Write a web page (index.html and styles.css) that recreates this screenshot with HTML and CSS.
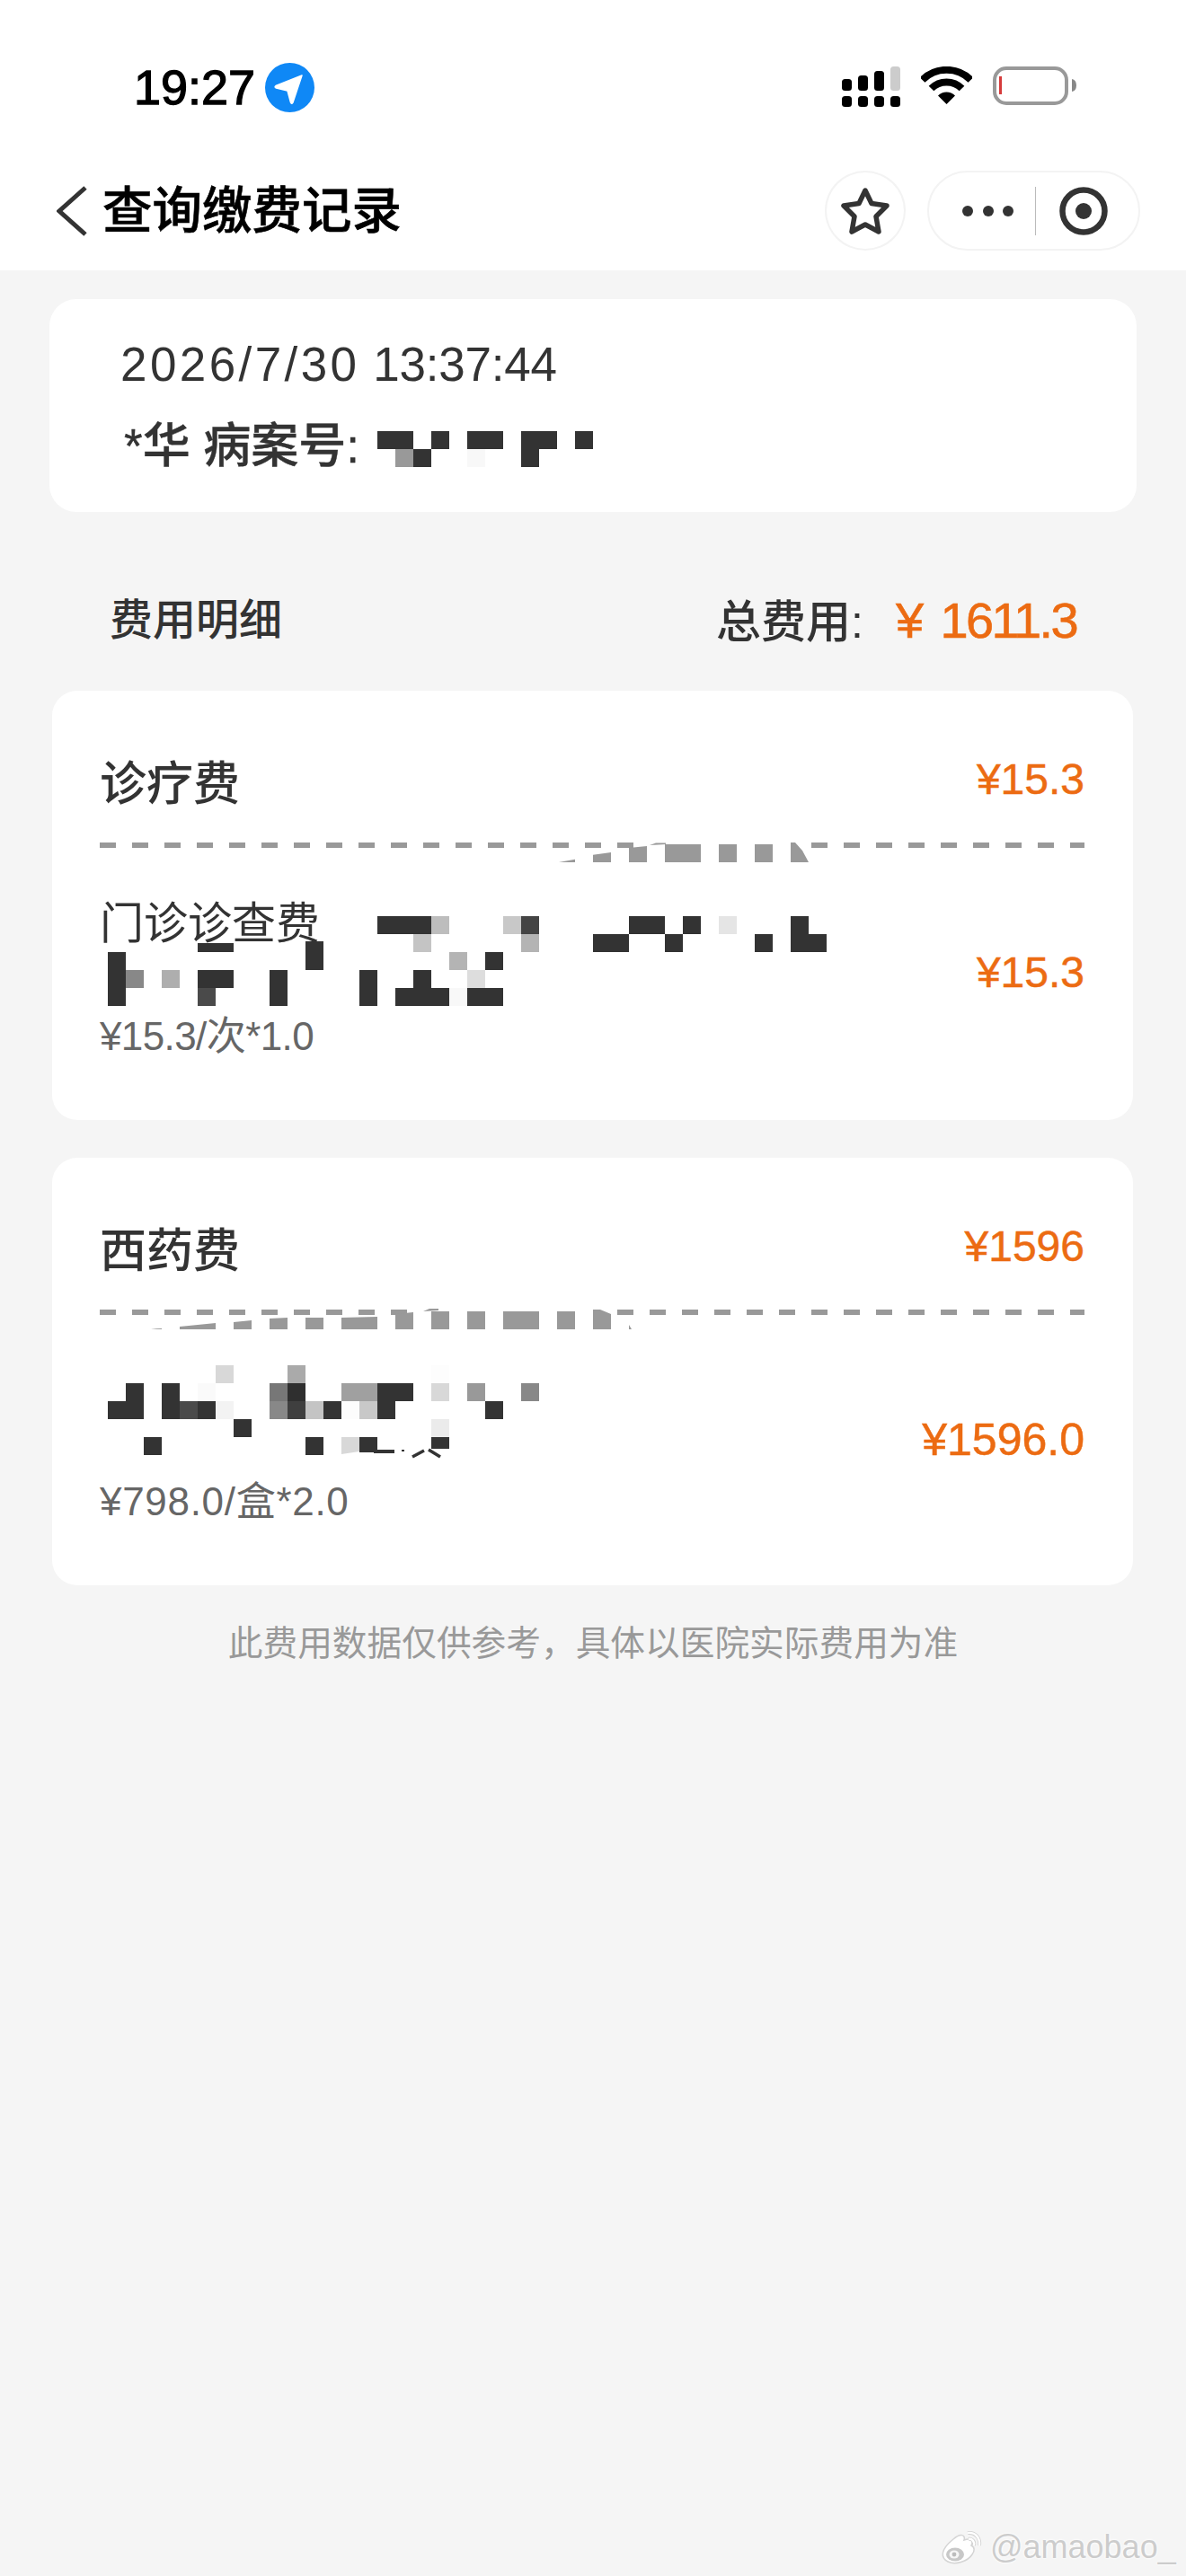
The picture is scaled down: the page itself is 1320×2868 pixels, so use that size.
FILE: index.html
```html
<!DOCTYPE html>
<html lang="zh-CN">
<head>
<meta charset="utf-8">
<title>查询缴费记录</title>
<link rel="stylesheet" href="styles.css">
</head>
<body>
<div class="page">
  <header class="header">
    <div class="status">
      <span class="time">19:27</span>
      <svg class="loc" width="55" height="55" viewBox="0 0 55 55"><circle cx="27.5" cy="27.5" r="27.5" fill="#0f88f6"/><path d="M41 14 L12 25.5 Q10 27 12.5 28 L25 31 L28.5 44 Q29.5 46.5 31 44 Z" fill="#fff" stroke="#fff" stroke-width="1.5" stroke-linejoin="round"/></svg>
      <div class="status-right">
        <svg width="65" height="45" viewBox="0 0 65 45"><g fill="#000"><rect x="0" y="14" width="11" height="13" rx="3.5"/><rect x="18" y="10" width="11" height="17" rx="3.5"/><rect x="36" y="5" width="11" height="22" rx="3.5"/><rect x="0" y="33" width="11" height="12" rx="3.5"/><rect x="18" y="33" width="11" height="12" rx="3.5"/><rect x="36" y="33" width="11" height="12" rx="3.5"/><rect x="54" y="33" width="11" height="12" rx="3.5"/></g><rect x="54" y="0" width="11" height="27" rx="3.5" fill="#ccc"/></svg>
        <svg width="57" height="42" viewBox="0 0 57 42"><g fill="none" stroke="#000" stroke-width="8"><path d="M1.6 15 A38 38 0 0 1 55.4 15"/><path d="M11.5 24.5 A24 24 0 0 1 45.5 24.5"/></g><path d="M28.5 42 L19 32.5 A13.5 13.5 0 0 1 38 32.5 Z" fill="#000"/></svg>
        <svg width="93" height="43" viewBox="0 0 93 43"><rect x="2" y="2" width="80" height="39" rx="13" fill="#fff" stroke="#999" stroke-width="4"/><rect x="7" y="11" width="3" height="20" fill="#d63b3b"/><path d="M88 14 Q93 15 93 21 Q93 27 88 28 Z" fill="#888"/></svg>
      </div>
    </div>
    <nav class="nav">
      <svg class="back" width="34" height="56" viewBox="0 0 34 56"><path d="M32 2 L3 28 L32 54" fill="none" stroke="#333" stroke-width="5"/></svg>
      <h1 class="title">查询缴费记录</h1>
      <div class="round-btn">
        <svg width="56" height="54" viewBox="0 0 56 54"><path d="M28 4 L35 18.5 L52 21 L40 33 L43 50 L28 42 L13 50 L16 33 L4 21 L21 18.5 Z" fill="none" stroke="#333" stroke-width="5.5" stroke-linejoin="round"/></svg>
      </div>
      <div class="capsule">
        <span class="dots"><i></i><i></i><i></i></span>
        <span class="sep"></span>
        <svg width="54" height="54" viewBox="0 0 54 54"><circle cx="27" cy="27" r="23.5" fill="none" stroke="#333" stroke-width="6.5"/><circle cx="27" cy="27" r="9" fill="#333"/></svg>
      </div>
    </nav>
  </header>

  <section class="patient">
    <div class="date"><span class="date-day">2026/7/30</span> <span class="date-time">13:37:44</span></div>
    <div class="who">*华 病案号:</div>
  </section>

  <div class="summary">
    <span class="summary-label">费用明细</span>
    <span class="summary-total">总费用:<b class="total">¥ 1611.3</b></span>
  </div>

  <section class="card">
    <div class="card-head"><span class="card-title">诊疗费</span><span class="price">¥15.3</span></div>
    <div class="dash"></div>
    <div class="item">
      <div class="item-text">
        <div class="item-name">门诊诊查费</div>
        <div class="item-unit item-unit-tight">¥15.3/次*1.0</div>
      </div>
      <span class="price">¥15.3</span>
    </div>
  </section>

  <section class="card card-second">
    <div class="card-head"><span class="card-title">西药费</span><span class="price">¥1596</span></div>
    <div class="dash"></div>
    <div class="item">
      <div class="item-text">
        <div class="item-name item-name-hidden"></div>
        <div class="item-unit item-unit-wide">¥798.0/盒*2.0</div>
      </div>
      <span class="price price-large">¥1596.0</span>
    </div>
  </section>

  <p class="note">此费用数据仅供参考，具体以医院实际费用为准</p>

  <div class="watermark">
    <svg width="48" height="40" viewBox="0 0 48 40"><path d="M14 11 C22 4 28 6 26 12 C33 9 37 13 34 18 C38 20 38 24 35 28 C30 36 16 40 8 36 C0 32 -1 23 14 11 Z" fill="#fff" stroke="#d4d4d4" stroke-width="1.5"/><ellipse cx="16" cy="28" rx="10" ry="7.5" fill="#c8c8c8"/><ellipse cx="15" cy="28" rx="5.5" ry="4.5" fill="#f6f6f6"/><circle cx="15" cy="28" r="2.4" fill="#bcbcbc"/><g fill="none" stroke="#d0d0d0" stroke-width="4"><path d="M30 4 C39 3 44 10 43 18"/><path d="M31 11 C35 10 38 14 37 18"/></g><g fill="none" stroke="#fff" stroke-width="2.4"><path d="M30 4 C39 3 44 10 43 18"/><path d="M31 11 C35 10 38 14 37 18"/></g></svg>
    <span class="wm-text">@amaobao_</span>
  </div>

  <svg class="mosaic" width="1320" height="2868" viewBox="0 0 1320 2868" aria-hidden="true">
    <g fill="#333">
      <rect x="420" y="480" width="40" height="20"/><rect x="480" y="480" width="20" height="20"/><rect x="520" y="480" width="40" height="20"/><rect x="580" y="480" width="40" height="20"/><rect x="640" y="480" width="20" height="20"/><rect x="460" y="500" width="20" height="20"/><rect x="580" y="500" width="20" height="20"/>
      <rect x="420" y="1020" width="60" height="20"/><rect x="700" y="1020" width="40" height="20"/><rect x="760" y="1020" width="20" height="20"/><rect x="880" y="1020" width="20" height="20"/>
      <rect x="660" y="1040" width="40" height="20"/><rect x="740" y="1040" width="20" height="20"/><rect x="840" y="1040" width="20" height="20"/><rect x="880" y="1040" width="40" height="20"/>
      <rect x="120" y="1060" width="20" height="60"/><rect x="220" y="1050" width="40" height="10"/><rect x="220" y="1080" width="40" height="20"/><rect x="300" y="1080" width="20" height="40"/><rect x="340" y="1048" width="20" height="32"/><rect x="400" y="1080" width="20" height="40"/><rect x="460" y="1080" width="20" height="20"/><rect x="440" y="1100" width="60" height="20"/><rect x="540" y="1060" width="20" height="20"/><rect x="520" y="1100" width="40" height="20"/>
      <rect x="140" y="1540" width="20" height="20"/><rect x="180" y="1540" width="20" height="40"/><rect x="420" y="1540" width="40" height="20"/><rect x="120" y="1560" width="40" height="20"/><rect x="220" y="1560" width="20" height="20"/><rect x="360" y="1560" width="20" height="20"/><rect x="420" y="1560" width="20" height="20"/><rect x="540" y="1560" width="20" height="20"/><rect x="260" y="1580" width="20" height="20"/><rect x="160" y="1600" width="20" height="20"/><rect x="340" y="1600" width="20" height="20"/><rect x="400" y="1600" width="20" height="17"/><rect x="480" y="1600" width="20" height="13"/>
      <rect x="416" y="1614" width="23" height="4"/><rect x="447" y="1614" width="3" height="2"/>
    </g>
    <path d="M459 1622 L472 1615 M477 1614 L490 1622" fill="none" stroke="#333" stroke-width="3.5"/>
    <g fill="#999">
      <rect x="440" y="500" width="20" height="20"/>
    </g>
    <rect x="520" y="500" width="20" height="20" fill="#f8f8f8"/>
    <rect x="480" y="1020" width="20" height="20" fill="#bdbdbd"/><rect x="560" y="1020" width="20" height="20" fill="#c8c8c8"/><rect x="580" y="1020" width="20" height="20" fill="#444"/><rect x="460" y="1040" width="20" height="20" fill="#c4c4c4"/><rect x="580" y="1040" width="20" height="20" fill="#b4b4b4"/><rect x="800" y="1020" width="20" height="20" fill="#e5e5e5"/>
    <rect x="140" y="1080" width="20" height="20" fill="#888"/><rect x="180" y="1080" width="20" height="20" fill="#aeaeae"/><rect x="220" y="1100" width="20" height="20" fill="#4a4a4a"/><rect x="500" y="1060" width="20" height="20" fill="#b4b4b4"/><rect x="520" y="1080" width="20" height="20" fill="#ddd"/><rect x="500" y="1100" width="20" height="20" fill="#f8f8f8"/>
    <rect x="240" y="1520" width="20" height="20" fill="#d8d8d8"/><rect x="320" y="1520" width="20" height="20" fill="#aaa"/><rect x="480" y="1520" width="20" height="20" fill="#fdfdfd"/>
    <rect x="220" y="1540" width="20" height="20" fill="#fafafa"/><rect x="300" y="1540" width="20" height="20" fill="#777"/><rect x="320" y="1540" width="20" height="20" fill="#2f2f2f"/><rect x="380" y="1540" width="40" height="20" fill="#a0a0a0"/><rect x="480" y="1540" width="20" height="20" fill="#d8d8d8"/><rect x="520" y="1540" width="20" height="20" fill="#999"/><rect x="580" y="1540" width="20" height="20" fill="#888"/>
    <rect x="200" y="1560" width="20" height="20" fill="#4a4a4a"/><rect x="240" y="1560" width="20" height="20" fill="#f3f3f3"/><rect x="300" y="1560" width="20" height="20" fill="#888"/><rect x="320" y="1560" width="20" height="20" fill="#3f3f3f"/><rect x="340" y="1560" width="20" height="20" fill="#c4c4c4"/><rect x="380" y="1560" width="20" height="20" fill="#fcfcfc"/><rect x="400" y="1560" width="20" height="20" fill="#c8c8c8"/>
    <rect x="480" y="1580" width="20" height="20" fill="#ebebeb"/>
    <path d="M380 1600 H400 V1616 L380 1619 Z" fill="#d8d8d8"/>

    <g fill="#fff">
      <rect x="706" y="936" width="196" height="10"/>
      <rect x="470" y="1456" width="216" height="9"/>
    </g>
    <g fill="#999">
      <path d="M622 960 L640 956.7 V960 Z"/><path d="M660 951.7 L680 949 V960 H660 Z"/><path d="M700 944 L720 942 V960 H700 Z"/><path d="M723 941 L730 938.5 H741 V940 Z"/>
      <rect x="740" y="940" width="40" height="20"/><rect x="800" y="940" width="20" height="20"/><rect x="840" y="940" width="20" height="20"/>
      <path d="M880 938 H885 L893 947 L900 960 H880 Z"/>
      <path d="M168 1479.5 L180 1479 V1480 H174 Z"/><path d="M200 1477 L240 1473 V1480 H200 Z"/><path d="M260 1472 L280 1470 V1480 H260 Z"/><path d="M300 1468 L320 1467 V1480 H300 Z"/><rect x="340" y="1467" width="20" height="13"/><path d="M380 1467 L420 1466 V1480 H380 Z"/>
      <path d="M440 1463 L460 1461 V1480 H440 Z"/><path d="M471 1460 L478 1457 H488 V1459 Z"/>
      <rect x="480" y="1460" width="20" height="20"/><rect x="520" y="1460" width="20" height="20"/><rect x="560" y="1460" width="40" height="20"/><rect x="620" y="1460" width="20" height="20"/>
      <path d="M660 1458 H668 L680 1463 V1480 H660 Z"/><path d="M700 1475 L703 1480 H700 Z"/>
    </g>
  </svg>
</div>
</body>
</html>
```

FILE: styles.css
```css
* { box-sizing: border-box; }
html, body { margin: 0; padding: 0; }
body { font-family: "Liberation Sans", "Noto Sans CJK SC", sans-serif; color: #333; }
.page { position: relative; width: 1320px; height: 2868px; overflow: hidden; background: #f5f5f5; }

.header { height: 301px; background: #fff; }
.status { display: flex; align-items: flex-start; height: 190px; padding: 70px 122px 0 149px; }
.time { font-size: 54px; line-height: 55px; color: #000; -webkit-text-stroke: 1.3px #000; }
.loc { margin-left: 11px; }
.status-right { display: flex; align-items: flex-start; gap: 23px; margin-left: auto; padding-top: 4px; }

.nav { display: flex; align-items: center; height: 89px; padding: 0 51px 0 63px; }
.back { flex: none; }
.title { margin: 0 auto 0 17px; font-size: 55.5px; font-weight: 500; color: #000; line-height: 60px; -webkit-text-stroke: 0.6px #000; }
.round-btn { display: flex; align-items: center; justify-content: center; width: 90px; height: 89px; border: 2px solid #f3f3f3; border-radius: 50%; }
.capsule { display: flex; align-items: center; width: 237px; height: 89px; margin-left: 24px; padding-left: 37px; border: 2px solid #f3f3f3; border-radius: 45px; }
.dots { display: flex; gap: 10.5px; }
.dots i { display: block; width: 12px; height: 12px; border-radius: 50%; background: #333; }
.sep { width: 1px; height: 54px; margin: 0 26px 0 24px; background: #bbb; }

.patient { width: 1210px; height: 237px; margin: 32px 0 0 55px; padding: 43px 0 0 79px; background: #fff; border-radius: 30px; }
.date { font-size: 53px; line-height: 60px; color: #333; }
.date-day { letter-spacing: 3.4px; }
.date-time { letter-spacing: -0.2px; }
.who { margin-top: 31px; padding-left: 4px; font-size: 53px; line-height: 60px; font-weight: 500; color: #333; -webkit-text-stroke: 0.4px #333; }

.summary { display: flex; justify-content: space-between; align-items: center; height: 199px; padding: 43px 122px 0 122px; }
.summary-label { font-size: 48px; line-height: 60px; font-weight: 500; }
.summary-total { font-size: 50px; line-height: 60px; font-weight: 500; margin-top: 2px; }
.total { margin-left: 36px; font-size: 56px; font-weight: 400; letter-spacing: -2.6px; word-spacing: 8px; color: #ec6b12; -webkit-text-stroke: 0.6px #ec6b12; }

.card { width: 1203px; height: 478px; margin-left: 58px; padding: 0 54px 0 53px; background: #fff; border-radius: 28px; }
.card-second { height: 476px; margin-top: 42px; }
.card-head { display: flex; justify-content: space-between; align-items: center; height: 169px; padding-top: 38px; }
.card-title { font-size: 52px; line-height: 60px; font-weight: 500; }
.price { font-size: 48px; line-height: 60px; color: #ec6b12; -webkit-text-stroke: 0.5px #ec6b12; margin-top: -10px; }
.price-large { font-size: 50px; }
.dash { height: 6px; background: repeating-linear-gradient(90deg, #999 0 18px, transparent 18px 36px); }
.item { display: flex; justify-content: space-between; align-items: center; height: 240px; padding-top: 48px; }
.item-text { width: 560px; margin-top: -2px; }
.item-name { font-size: 49px; line-height: 60px; height: 133px; }
.item-name-hidden { height: 130px; }
.item-unit { font-size: 44px; line-height: 46px; color: #666; }
.item-unit-tight { letter-spacing: -0.6px; }
.item-unit-wide { letter-spacing: 0.7px; }

.note { margin: 40px 0 0; text-align: center; font-size: 38.7px; line-height: 50px; color: #999; }

.watermark { position: absolute; left: 1047px; top: 2816px; display: flex; align-items: center; gap: 7px; }
.wm-text { font-size: 36px; line-height: 40px; color: #ccc; text-shadow: 0 0 3px #fff, 0 0 3px #fff; }

.mosaic { position: absolute; left: 0; top: 0; pointer-events: none; }
```
